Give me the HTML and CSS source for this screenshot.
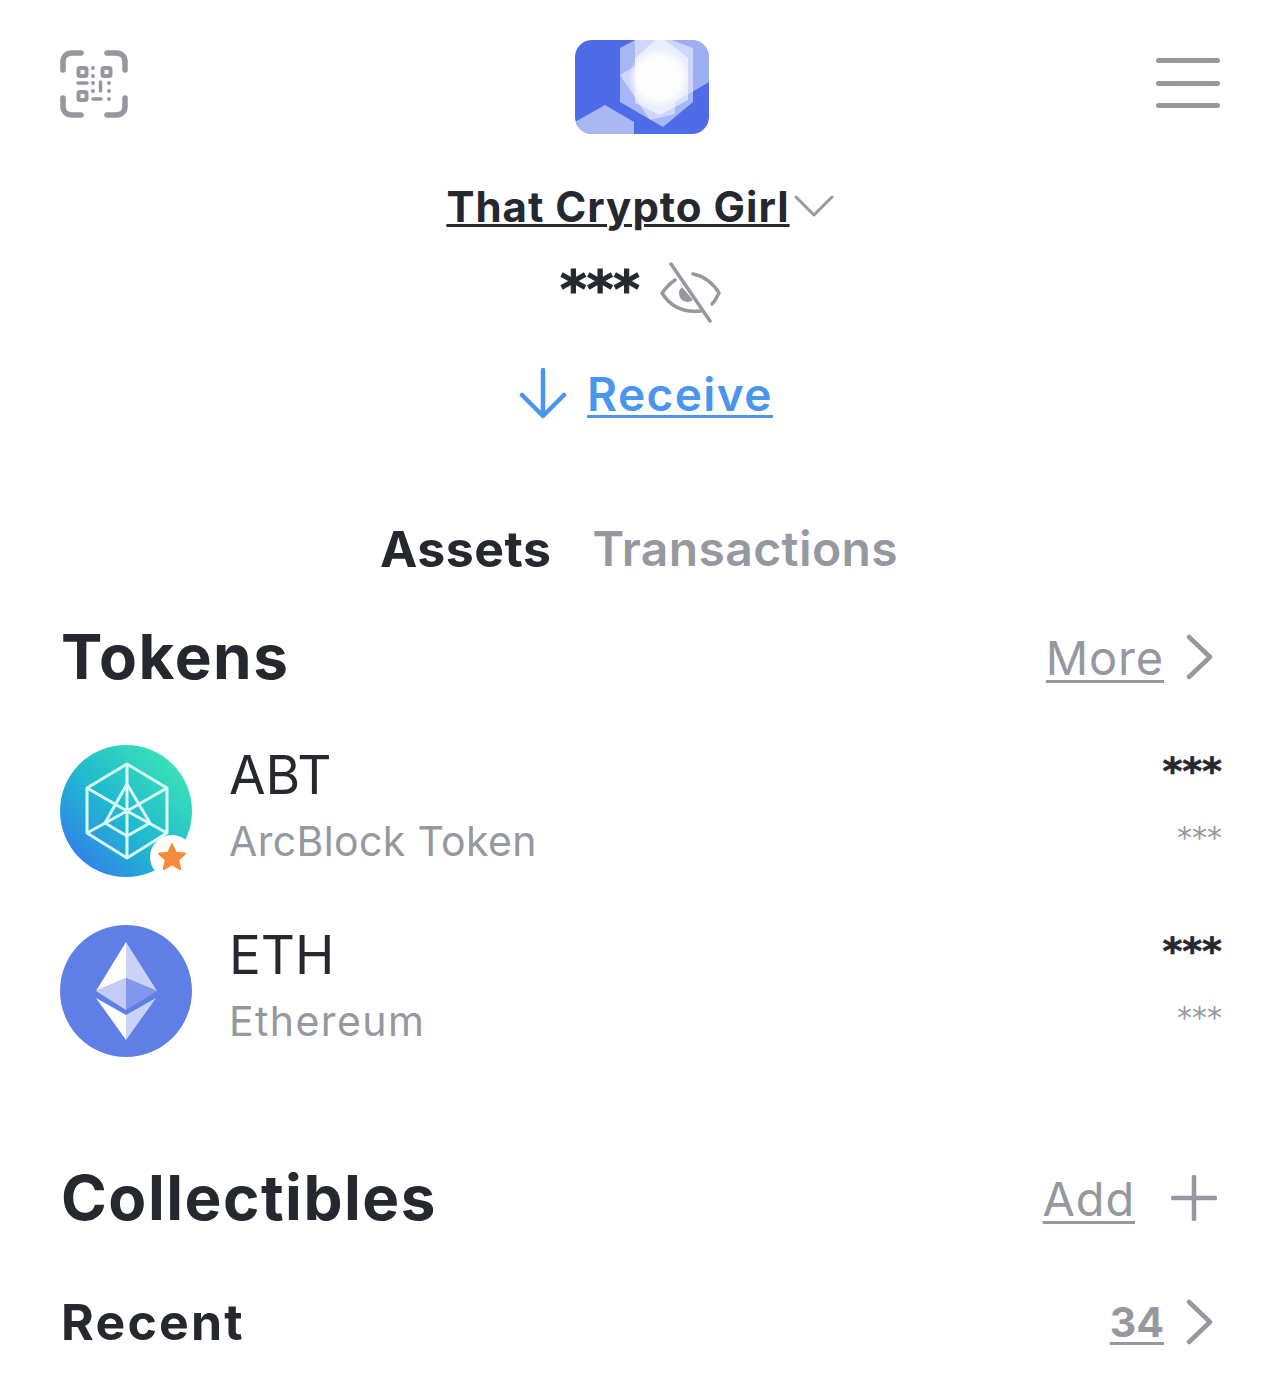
FILE: index.html
```html
<!DOCTYPE html>
<html lang="en">
<head>
    <meta charset="UTF-8">
    <meta name="viewport" content="width=device-width, initial-scale=1.0">
    <title>Wallet</title>
    <link rel="stylesheet" href="styles.css">
</head>
<body>
<div class="page">
    <header class="top">
        <svg class="scan" width="68" height="68" viewBox="0 0 68 68" fill="none" stroke="#96989f" stroke-width="5.500" stroke-linecap="round">
            <path d="M3 20V12C3 6.500 6.500 3 12 3H21"/>
            <path d="M47 3H56C61.500 3 65 6.500 65 12V20"/>
            <path d="M3 48V56C3 61.500 6.500 65 12 65H21"/>
            <path d="M47 65H56C61.500 65 65 61.500 65 56V48"/>
            <rect x="18.500" y="18" width="8" height="8" rx="1.500" stroke-width="4"/>
            <rect x="42.500" y="18" width="8" height="8" rx="1.500" stroke-width="4"/>
            <rect x="18.500" y="42" width="8" height="8" rx="1.500" stroke-width="4"/>
            <path d="M18 33H27M40.500 32V41M33 49H41" stroke-width="3.500"/>
            <path d="M33 18V18.100M33 26V26.100M33 33V33.100M33 41V41.100M49 33V33.100M49 41V41.100M49 49V49.100" stroke-width="4"/>
        </svg>
        <svg class="logo" width="134" height="94" viewBox="0 0 134 94">
            <defs>
                <clipPath id="logo-box"><rect width="134" height="94" rx="17"/></clipPath>
                <radialGradient id="logo-glow">
                    <stop offset="0" stop-color="#fff"/>
                    <stop offset=".7" stop-color="#fff" stop-opacity=".9"/>
                    <stop offset="1" stop-color="#fff" stop-opacity="0"/>
                </radialGradient>
            </defs>
            <g clip-path="url(#logo-box)">
                <rect width="134" height="94" fill="#4f6ce8"/>
                <path d="M0 82L30 65L59 82V94H0Z" fill="#aab7f3"/>
                <path d="M45 8L75 -8L118 8V62L88 87L45 62Z" fill="#fff" opacity=".5"/>
                <path d="M45 35L60 26V-2H134V42L100 62V74L75 80Z" fill="#fff" opacity=".45"/>
                <path d="M60 18L85 -4L113 18V60L85 75L60 63Z" fill="#fff" opacity=".55"/>
                <ellipse cx="84" cy="38" rx="31" ry="30" fill="url(#logo-glow)"/>
            </g>
        </svg>
        <button class="menu" aria-label="menu"><i></i><i></i><i></i></button>
    </header>

    <section class="account">
        <div class="name-row">
            <a class="name">That Crypto Girl</a>
            <svg width="40" height="24" viewBox="0 0 40 24" fill="none" stroke="#96989f" stroke-width="3" stroke-linecap="round" stroke-linejoin="round"><path d="M2 3L20 21L38 3"/></svg>
        </div>
        <div class="balance-row">
            <span class="balance">***</span>
            <svg width="62" height="62" viewBox="0 0 62 62" fill="none" stroke="#96989f" stroke-width="3.500" stroke-linecap="round">
                <path d="M11 2L50 59"/>
                <path d="M15 18C9 22 5 27 2 31C10 44 22 51 41 49"/>
                <path d="M33 12C44 14 54 22 59 31C57 35 55 39 52 42"/>
                <path d="M22 25A8 8 0 0 0 33 38Z" fill="#96989f" stroke="none"/>
            </svg>
        </div>
        <div class="receive-row">
            <svg class="down" width="48" height="52" viewBox="0 0 48 52" fill="none" stroke="#4a96ee" stroke-width="4.500" stroke-linecap="round" stroke-linejoin="round"><path d="M24 3V49M3 28L24 49L45 28"/></svg>
            <a class="receive">Receive</a>
        </div>
    </section>

    <nav class="tabs">
        <span class="tab active">Assets</span>
        <span class="tab">Transactions</span>
    </nav>

    <section class="tokens">
        <div class="section-head">
            <h2>Tokens</h2>
            <div class="side-link">
                <a>More</a>
                <svg class="arrow" width="30" height="46" viewBox="0 0 30 46" fill="none" stroke="#96989f" stroke-width="4.500" stroke-linecap="round" stroke-linejoin="round"><path d="M5 3L26 23L5 43"/></svg>
            </div>
        </div>
        <div class="token">
            <div class="token-icon">
                <svg width="132" height="132" viewBox="0 0 132 132">
                    <defs>
                        <linearGradient id="abt" x1="0" y1="1" x2="1" y2="0">
                            <stop offset="0" stop-color="#3a6cf2"/>
                            <stop offset=".45" stop-color="#1fb8d0"/>
                            <stop offset="1" stop-color="#42eeb0"/>
                        </linearGradient>
                    </defs>
                    <circle cx="66" cy="66" r="66" fill="url(#abt)"/>
                    <g fill="none" stroke="#d9fbf6" stroke-width="3" stroke-linejoin="round">
                        <path d="M67 19L107 43V88L67 113L27 88V43Z"/>
                        <path d="M27 43L67 66L107 43M67 19V113M27 88L67 66L107 88"/>
                        <path d="M67 39L45 78L67 91L90 78Z"/>
                    </g>
                </svg>
                <span class="star-badge">
                    <svg width="30" height="30" viewBox="0 0 30 30"><path d="M15 2L19 10.500L28.500 11.500L21.500 18L23.500 27.500L15 22.700L6.500 27.500L8.500 18L1.500 11.500L11 10.500Z" fill="#f98a3c" stroke="#f98a3c" stroke-width="1.500" stroke-linejoin="round"/></svg>
                </span>
            </div>
            <div class="token-text">
                <div class="symbol">ABT</div>
                <div class="token-name">ArcBlock Token</div>
            </div>
            <div class="token-amount">
                <div class="amt">***</div>
                <div class="fiat">***</div>
            </div>
        </div>
        <div class="token">
            <div class="token-icon">
                <svg width="132" height="132" viewBox="0 0 132 132">
                    <circle cx="66" cy="66" r="66" fill="#5f7fe6"/>
                    <path d="M66 17L36 66L66 53Z" fill="#fff"/>
                    <path d="M66 17L97 66L66 53Z" fill="#c9d2f7"/>
                    <path d="M66 53L36 66L66 85Z" fill="#c2ccf6"/>
                    <path d="M66 53L97 66L66 85Z" fill="#8398ec"/>
                    <path d="M36 73L66 90V115Z" fill="#fff"/>
                    <path d="M96 73L66 90V115Z" fill="#c9d2f7"/>
                </svg>
            </div>
            <div class="token-text">
                <div class="symbol">ETH</div>
                <div class="token-name wide">Ethereum</div>
            </div>
            <div class="token-amount">
                <div class="amt">***</div>
                <div class="fiat">***</div>
            </div>
        </div>
    </section>

    <section class="collectibles">
        <div class="section-head">
            <h2>Collectibles</h2>
            <div class="side-link">
                <a>Add</a>
                <svg class="plus" width="46" height="46" viewBox="0 0 46 46" fill="none" stroke="#96989f" stroke-width="4.500" stroke-linecap="round"><path d="M23 2V44M2 23H44"/></svg>
            </div>
        </div>
        <div class="recent-head">
            <h3>Recent</h3>
            <div class="side-link">
                <a class="count">34</a>
                <svg class="arrow" width="30" height="46" viewBox="0 0 30 46" fill="none" stroke="#96989f" stroke-width="4.500" stroke-linecap="round" stroke-linejoin="round"><path d="M5 3L26 23L5 43"/></svg>
            </div>
        </div>
    </section>
</div>
</body>
</html>
```

FILE: styles.css
```css
*{
    margin: 0;
    padding: 0;
    box-sizing: border-box;
}
html,body{
    background-color: #fff;
    overflow: hidden;
}
body{
    font-family: "Inter", "Liberation Sans", sans-serif;
    color: #25282e;
}
.page{
    width: 1283px;
    height: 1377px;
    padding: 40px 61px 0 60px;
}
svg{
    display: block;
    flex: none;
}
a{
    text-decoration: underline;
}

/* top bar */
.top{
    display: grid;
    grid-template-columns: 1fr auto 1fr;
    align-items: start;
}
.scan{
    margin-top: 10px;
}
.logo{
    margin-left: 2px;
}
.menu{
    justify-self: end;
    width: 64px;
    height: 50px;
    margin: 18px 2px 0 0;
    border: none;
    background: none;
    display: flex;
    flex-direction: column;
    justify-content: space-between;
}
.menu i{
    display: block;
    height: 5px;
    border-radius: 3px;
    background-color: #96989f;
}

/* account */
.account{
    display: flex;
    flex-direction: column;
    align-items: center;
}
.name-row{
    display: flex;
    align-items: center;
    gap: 4px;
    margin: 45px 2px 0 0;
    height: 54px;
}
.name{
    font-size: 42px;
    font-weight: 650;
    letter-spacing: 1px;
    text-decoration-thickness: 3px;
    text-underline-offset: 2px;
}
.balance-row{
    display: flex;
    align-items: center;
    gap: 20px;
    margin-top: 29px;
    height: 62px;
}
.balance{
    font-family: "DejaVu Sans", sans-serif;
    font-size: 51px;
    font-weight: 700;
    line-height: 62px;
    margin-top: -6px;
    -webkit-text-stroke: 1px #25282e;
}
.receive-row{
    display: flex;
    align-items: center;
    gap: 20px;
    margin: 43px 0 0 10px;
    height: 54px;
    color: #4a96ee;
}
.down{
    margin-top: -2px;
}
.receive{
    font-size: 46px;
    font-weight: 600;
    letter-spacing: 1.4px;
    text-decoration-thickness: 3px;
    text-underline-offset: 4px;
}

/* tabs */
.tabs{
    display: flex;
    justify-content: center;
    gap: 41px;
    margin: 99px 4px 0 0;
    font-size: 48px;
    font-weight: 600;
    line-height: 58px;
    letter-spacing: .4px;
}
.tab{
    color: #96989f;
}
.tab.active{
    color: #25282e;
    font-size: 50px;
    font-weight: 700;
    letter-spacing: .5px;
}

/* sections */
.section-head{
    display: flex;
    justify-content: space-between;
    align-items: center;
}
.section-head h2{
    font-size: 62px;
    font-weight: 700;
    line-height: 72px;
    letter-spacing: 1.5px;
    margin-left: 1px;
}
.side-link{
    display: flex;
    align-items: center;
    gap: 20px;
    color: #96989f;
    font-size: 47px;
    letter-spacing: .8px;
}
.side-link a{
    text-decoration-thickness: 3px;
    text-underline-offset: 5px;
}
.arrow{
    margin-right: 8px;
}
.plus{
    margin: 0 5px 0 16px;
}
.tokens{
    margin-top: 43px;
}
.token{
    display: flex;
    align-items: center;
    margin-top: 48px;
    height: 132px;
}
.tokens .section-head + .token{
    margin-top: 52px;
}
.token-icon{
    position: relative;
    width: 132px;
    height: 132px;
    margin-right: 37px;
}
.star-badge{
    position: absolute;
    right: -2px;
    bottom: -2px;
    width: 44px;
    height: 44px;
    border-radius: 50%;
    background-color: #fff;
    display: flex;
    align-items: center;
    justify-content: center;
}
.token-text{
    flex: 1;
    margin-top: -13px;
}
.symbol{
    font-size: 53px;
    line-height: 62px;
}
.token-name{
    font-size: 41px;
    line-height: 48px;
    margin-top: 11px;
    letter-spacing: .35px;
    color: #96989f;
}
.token-name.wide{
    letter-spacing: 1.4px;
}
.token-amount{
    align-self: flex-start;
    text-align: right;
    font-family: "DejaVu Sans", sans-serif;
    padding-top: 4px;
}
.amt{
    font-size: 38px;
    font-weight: 700;
    line-height: 44px;
    -webkit-text-stroke: .6px #25282e;
}
.fiat{
    font-size: 30px;
    line-height: 34px;
    margin-top: 28px;
    color: #96989f;
}
.collectibles{
    margin-top: 105px;
}
.recent-head{
    display: flex;
    justify-content: space-between;
    align-items: center;
    margin-top: 59px;
}
.recent-head h3{
    font-size: 50px;
    font-weight: 700;
    line-height: 58px;
    letter-spacing: 2.2px;
    margin-left: 1px;
}
.count{
    font-size: 41px;
    font-weight: 700;
    letter-spacing: 0;
}
```
